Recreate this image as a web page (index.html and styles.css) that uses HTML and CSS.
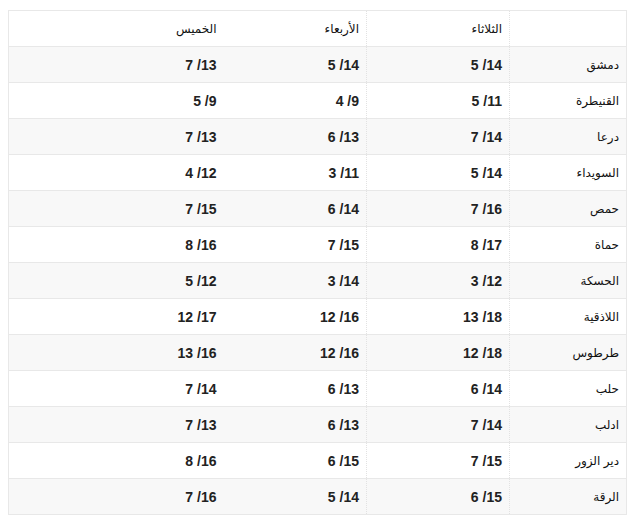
FILE: index.html
```html
<!DOCTYPE html>
<html lang="ar" dir="rtl">
<head>
<meta charset="utf-8">
<link rel="stylesheet" href="styles.css">
</head>
<body>
<table class="weather">
<colgroup>
<col class="c-name"><col class="c-day"><col class="c-day"><col class="c-last">
</colgroup>
<thead>
<tr><th></th><th>الثلاثاء</th><th>الأربعاء</th><th>الخميس</th></tr>
</thead>
<tbody>
<tr><td>دمشق</td><td>14/ 5</td><td>14/ 5</td><td>13/ 7</td></tr>
<tr><td>القنيطرة</td><td>11/ 5</td><td>9/ 4</td><td>9/ 5</td></tr>
<tr><td>درعا</td><td>14/ 7</td><td>13/ 6</td><td>13/ 7</td></tr>
<tr><td>السويداء</td><td>14/ 5</td><td>11/ 3</td><td>12/ 4</td></tr>
<tr><td>حمص</td><td>16/ 7</td><td>14/ 6</td><td>15/ 7</td></tr>
<tr><td>حماة</td><td>17/ 8</td><td>15/ 7</td><td>16/ 8</td></tr>
<tr><td>الحسكة</td><td>12/ 3</td><td>14/ 3</td><td>12/ 5</td></tr>
<tr><td>اللاذقية</td><td>18/ 13</td><td>16/ 12</td><td>17/ 12</td></tr>
<tr><td>طرطوس</td><td>18/ 12</td><td>16/ 12</td><td>16/ 13</td></tr>
<tr><td>حلب</td><td>14/ 6</td><td>13/ 6</td><td>14/ 7</td></tr>
<tr><td>ادلب</td><td>14/ 7</td><td>13/ 6</td><td>13/ 7</td></tr>
<tr><td>دير الزور</td><td>15/ 7</td><td>15/ 6</td><td>16/ 8</td></tr>
<tr><td>الرقة</td><td>15/ 6</td><td>14/ 5</td><td>16/ 7</td></tr>
</tbody>
</table>
</body>
</html>
```
FILE: styles.css
```css
html, body {
  margin: 0;
  padding: 0;
  background: #fff;
}
body {
  padding: 10px 9px 0 8px;
  font-family: "Liberation Sans", Arial, "DejaVu Sans", sans-serif;
  color: #222;
}
.weather {
  width: 100%;
  border-collapse: collapse;
  table-layout: fixed;
  border: 1px solid #e8e8e8;
}
.c-name { width: 117px; }
.c-day { width: 143px; }
.weather th,
.weather td {
  height: 35px;
  padding: 0 7px 0 6px;
  text-align: right;
  border-top: 1px solid #e8e8e8;
  border-bottom: 1px solid #e8e8e8;
  border-left: 1px dotted #e2e2e2;
  vertical-align: middle;
}
.weather th:nth-child(3),
.weather td:nth-child(3) {
  border-left: none;
}
.weather th:last-child,
.weather td:last-child {
  border-left: 1px solid #e8e8e8;
}
.weather th {
  font-weight: normal;
  font-size: 12px;
  color: #111;
}
.weather td {
  font-weight: bold;
  font-size: 14px;
  color: #222;
}
.weather td:first-child {
  font-weight: normal;
  font-size: 12px;
  color: #111;
}
.weather tbody tr:nth-child(odd) {
  background: #f8f8f8;
}
```
